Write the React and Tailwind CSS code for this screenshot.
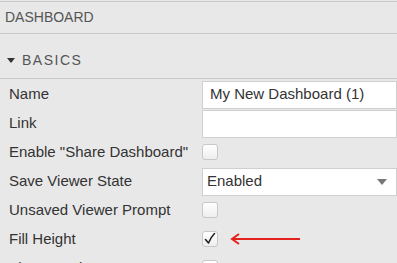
import React from 'react'

const ROWS = [
    { label: 'Name', kind: 'input', value: 'My New Dashboard (1)' },
    { label: 'Link', kind: 'input', value: '' },
    { label: 'Enable "Share Dashboard"', kind: 'check' },
    { label: 'Save Viewer State', kind: 'select', value: 'Enabled' },
    { label: 'Unsaved Viewer Prompt', kind: 'check' },
    { label: 'Fill Height', kind: 'check', checked: true, arrow: true },
    { label: 'Float Header', kind: 'check' },
]

function Checkbox({ checked }) {
    return (
        <div className="w-[16px] h-[16px] rounded-[3px] border border-[#c8c8c8] bg-gradient-to-b from-white to-[#eeeeee] flex items-center justify-center">
            {checked && (
                <svg width="14" height="14" viewBox="0 0 14 14">
                    <path d="M2.5 7.5 L5.5 11 C7 7 9 4 11.5 1.5" fill="none" stroke="#222" strokeWidth="1.6" strokeLinecap="round" strokeLinejoin="round" />
                </svg>
            )}
        </div>
    )
}

function Arrow() {
    return (
        <svg width="72" height="14" viewBox="0 0 72 14" className="ml-[12px]">
            <path d="M2 7 H70" stroke="#e3211d" strokeWidth="2" />
            <path d="M9 2 L2 7 L9 12" fill="none" stroke="#e3211d" strokeWidth="2" />
        </svg>
    )
}

function Field({ row }) {
    if (row.kind === 'input') {
        return (
            <div className="w-[195px] h-[28px] bg-white border border-[#cfcfcf] flex items-center px-[7px] text-[15px] text-[#333]">
                {row.value}
            </div>
        )
    }
    if (row.kind === 'select') {
        return (
            <div className="w-[195px] h-[28px] bg-white border border-[#cfcfcf] flex items-center justify-between pl-[4px] pr-[9px] text-[15px] text-[#333]">
                <span>{row.value}</span>
                <span className="w-0 h-0 border-l-[5px] border-r-[5px] border-t-[6px] border-l-transparent border-r-transparent border-t-[#777]" />
            </div>
        )
    }
    return (
        <div className="flex items-center -mt-[2px]">
            <Checkbox checked={row.checked} />
            {row.arrow && <Arrow />}
        </div>
    )
}

export default function App() {
    return (
        <div className="w-[397px] h-[263px] overflow-hidden bg-[#e8e8e8] font-['Liberation_Sans',Arial,sans-serif]">
            <div className="h-px" />
            <div className="border-t border-[#c9c9c9] h-[32px] flex items-center pl-[5px] text-[14px] text-[#555]">
                DASHBOARD
            </div>
            <div className="border-t border-[#c9c9c9] h-[45px] flex items-center pt-[8px] pl-[7px] text-[14px] text-[#555] tracking-[1.5px]">
                <span className="w-0 h-0 border-l-[4px] border-r-[4px] border-t-[5px] border-l-transparent border-r-transparent border-t-[#333] mr-[7px]" />
                BASICS
            </div>
            <div className="border-t border-[#c9c9c9] pt-px">
                {ROWS.map((row) => (
                    <div key={row.label} className="h-[29px] flex items-center">
                        <div className="w-[202px] pl-[9px] text-[15px] text-[#333] whitespace-nowrap">{row.label}</div>
                        <Field row={row} />
                    </div>
                ))}
            </div>
        </div>
    )
}
